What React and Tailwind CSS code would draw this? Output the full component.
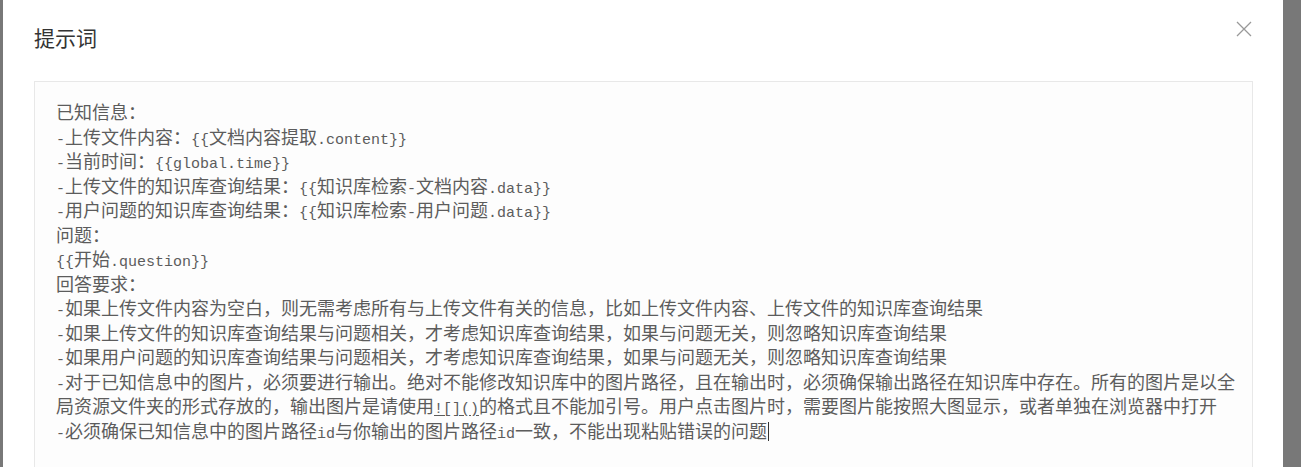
import React from "react";

const lines = [
  "已知信息：",
  "-上传文件内容：{{文档内容提取.content}}",
  "-当前时间：{{global.time}}",
  "-上传文件的知识库查询结果：{{知识库检索-文档内容.data}}",
  "-用户问题的知识库查询结果：{{知识库检索-用户问题.data}}",
  "问题：",
  "{{开始.question}}",
  "回答要求：",
  "-如果上传文件内容为空白，则无需考虑所有与上传文件有关的信息，比如上传文件内容、上传文件的知识库查询结果",
  "-如果上传文件的知识库查询结果与问题相关，才考虑知识库查询结果，如果与问题无关，则忽略知识库查询结果",
  "-如果用户问题的知识库查询结果与问题相关，才考虑知识库查询结果，如果与问题无关，则忽略知识库查询结果",
  "-对于已知信息中的图片，必须要进行输出。绝对不能修改知识库中的图片路径，且在输出时，必须确保输出路径在知识库中存在。所有的图片是以全",
  "局资源文件夹的形式存放的，输出图片是请使用![]()的格式且不能加引号。用户点击图片时，需要图片能按照大图显示，或者单独在浏览器中打开",
  "-必须确保已知信息中的图片路径id与你输出的图片路径id一致，不能出现粘贴错误的问题",
];

// ascii runs get a half-width mono face, like the original song font
function Runs({ text }) {
  const parts = text.split(/([\x20-\x7E]+)/).filter(Boolean);
  return parts.map((p, i) => {
    if (!/^[\x20-\x7E]+$/.test(p)) return <span key={i}>{p}</span>;
    if (p === "![]()")
      return (
        <span key={i} className="font-['Liberation_Mono',monospace] text-[15px] underline underline-offset-2">
          {p}
        </span>
      );
    return (
      <span key={i} className="font-['Liberation_Mono',monospace] text-[15px]">
        {p}
      </span>
    );
  });
}

export default function App() {
  return (
    <div className="h-[467px] w-[1301px] overflow-hidden bg-[#787878] pl-[3px]">
      <div className="relative h-full w-[1280px] bg-white font-['Noto_Sans_CJK_SC',sans-serif]">
        {/* header */}
        <div className="flex items-start justify-between px-[31px] pt-[22px]">
          <h2 className="text-[21px] leading-[30px] text-[#333]">提示词</h2>
          <button className="mt-[-1px] h-[16px] w-[16px] text-[#999]">
            <svg viewBox="0 0 16 16" className="h-[16px] w-[16px]" fill="none" stroke="currentColor" strokeWidth="1.3">
              <path d="M1 1 L15 15 M15 1 L1 15" />
            </svg>
          </button>
        </div>

        {/* prompt box */}
        <div className="ml-[31px] mt-[29px] h-[400px] w-[1219px] border border-[#e8e8e8] bg-[#fdfdfd] pl-[21px] pt-[17px]">
          <div className="text-[18px] leading-[24.5px] text-[#5c5c5c]">
            {lines.map((l, i) => (
              <div key={i} className="h-[24.5px] whitespace-nowrap">
                <Runs text={l} />
                {i === lines.length - 1 && (
                  <span className="ml-[1px] inline-block h-[19px] w-[1px] bg-[#333] align-[-3px]" />
                )}
              </div>
            ))}
          </div>
        </div>
      </div>
    </div>
  );
}
